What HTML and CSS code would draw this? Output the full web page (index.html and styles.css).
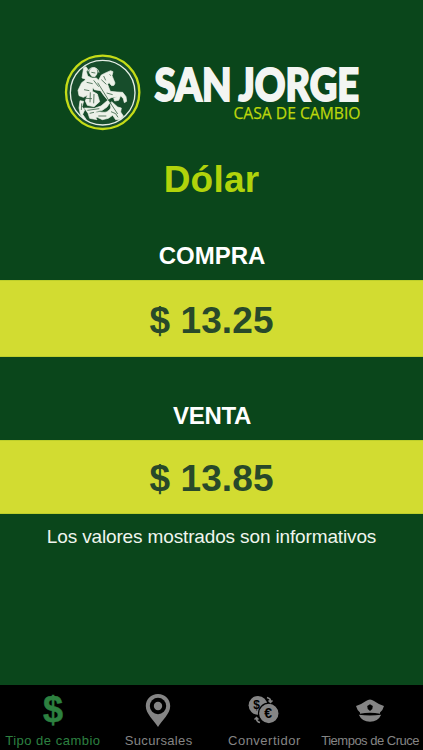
FILE: index.html
```html
<!DOCTYPE html>
<html lang="es">
<head>
<meta charset="utf-8">
<title>San Jorge Casa de Cambio</title>
<link rel="stylesheet" href="styles.css">
</head>
<body>
<main class="screen">
  <header class="brand">
    <svg class="emblem" viewBox="0 0 255 255" aria-hidden="true">
      <circle class="ring" cx="128" cy="127" r="110"/>
      <circle class="inner-ring" cx="128" cy="128" r="97"/>
      <g class="figure">
        <path d="M88 68C88 57 95 52 104 53C112 56 113 66 110 73L105 80L95 79Z"/>
        <path d="M66 84L71 53L78 50L84 59L79 64L83 78L96 84L109 84L118 92L122 122L103 119L91 99L73 86Z"/>
        <path d="M79 88L65 98L54 121L57 137L70 142L82 136L76 153L82 166L102 170L119 155L112 132L97 124L100 105Z"/>
        <path d="M118 108L117 88L124 75L138 68L152 62L159 65L156 77L165 99L162 106L155 107L147 98L143 103L147 114L151 124L171 126L188 127L198 140L200 154L193 158L190 146L182 137L176 151L164 153L161 145L171 140L153 143L143 150L132 137L122 123Z"/>
        <path d="M60 152L71 154L66 170L74 180L68 193L79 209L70 206L61 192L57 174Z"/>
        <path d="M73 174L103 175L123 168L143 151L151 157L141 171L127 181L111 184L102 195L111 209L89 205L84 190Z"/>
        <path d="M93 204C109 176 127 190 139 186C147 181 155 177 151 165L155 155L173 171L184 174L182 186L190 198L181 208L167 209L158 196L145 205L127 209L112 202Z"/>
      </g>
      <path class="halo" d="M84 65A17 17 0 0 1 117 68"/>
      <g class="detail">
        <path d="M94 67L106 69M80 97L98 101M72 119L88 122M91 127L90 157M102 132L101 160M77 145L96 146"/>
        <path d="M101 91L116 110M113 98L150 157L173 192M131 78L137 91M124 89L139 103M149 73L152 77M140 129L158 134M82 181L118 176M89 190L102 187M115 198L139 198M153 185L167 191L174 202M65 160L64 180"/>
      </g>
    </svg>
    <svg class="wordmark" viewBox="0 0 214 75" role="img" aria-label="San Jorge Casa de Cambio">
      <text class="word-main" x="9.5" y="46.2" textLength="77" lengthAdjust="spacingAndGlyphs">SAN</text>
      <text class="word-main" x="93.5" y="46.2" textLength="120.5" lengthAdjust="spacingAndGlyphs">JORGE</text>
      <text class="word-sub" x="88.5" y="63.7" textLength="127" lengthAdjust="spacingAndGlyphs">CASA DE CAMBIO</text>
    </svg>
  </header>
  <h1 class="currency">Dólar</h1>
  <section class="rate buy">
    <h2 class="rate-name">COMPRA</h2>
    <p class="rate-value">$ 13.25</p>
  </section>
  <section class="rate sell">
    <h2 class="rate-name">VENTA</h2>
    <p class="rate-value">$ 13.85</p>
  </section>
  <p class="note">Los valores mostrados son informativos</p>
</main>
<nav class="tabs">
  <a class="tab active">
    <svg class="tab-icon" viewBox="0 0 36 36"><text class="dollar" x="18" y="29" text-anchor="middle">$</text></svg>
    <span class="label l1">Tipo de cambio</span>
  </a>
  <a class="tab">
    <svg class="tab-icon" viewBox="0 0 36 36"><path class="fill" d="M17 1C10 1 4.8 6 4.8 13C4.8 21 13 27 17 34C21 27 29.2 21 29.2 13C29.2 6 24 1 17 1Z"/><circle class="hole" cx="17" cy="13" r="8.2"/><circle class="hole-dot" cx="17" cy="13" r="4.2"/></svg>
    <span class="label l2">Sucursales</span>
  </a>
  <a class="tab">
    <svg class="tab-icon" viewBox="0 0 36 36">
      <circle class="fill" cx="12" cy="12.3" r="9.4"/>
      <text class="coin-sign" x="10.5" y="16.3" text-anchor="middle">$</text>
      <circle class="coin" cx="22.8" cy="20.5" r="10.3"/>
      <text class="coin-sign euro" x="22.2" y="25.3" text-anchor="middle">€</text>
      <path class="arrow" d="M21 4.5Q25 5.5 24.5 8.5M22.5 7.5L24.5 9.5L26.5 7.5M10.5 24.5Q10 28.5 14 29.5M8.5 26.5L10.5 24.5L12.5 26.5"/>
    </svg>
    <span class="label l3">Convertidor</span>
  </a>
  <a class="tab">
    <svg class="tab-icon" viewBox="0 0 36 36"><path class="fill" d="M4 13Q10 11 14 8Q18 5 22 8Q26 11 32 13Q31 17 28 19.5V20.7Q18 18.6 8 20.7V19.5Q5 17 4 13ZM6.8 21.8Q18 23 29.2 21.8Q26 28.8 18 28.8Q10 28.8 6.8 21.8Z"/><path class="hole" d="M18 11.2L20.8 13L20.3 16L18 18L15.7 16L15.2 13Z"/></svg>
    <span class="label l4">Tiempos de Cruce</span>
  </a>
</nav>
</body>
</html>
```
FILE: styles.css
```css
* { box-sizing: border-box; }
body {
  margin: 0;
  height: 750px;
  display: flex;
  flex-direction: column;
  overflow: hidden;
  background: #0a461b;
  font-family: "Liberation Sans", Arial, sans-serif;
}
h1, h2, p { margin: 0; }
.screen { height: 685px; padding-top: 50px; text-align: center; }
.brand { display: flex; height: 85px; padding-left: 60px; }
.emblem { width: 85px; height: 85px; }
.ring { fill: #174d2b; stroke: #c4dc17; stroke-width: 7; }
.inner-ring { fill: none; stroke: #e5eee5; stroke-width: 4; }
.figure { fill: #edf1e9; stroke: #edf1e9; stroke-width: 2; stroke-linejoin: round; }
.halo { fill: none; stroke: #edf1e9; stroke-width: 2.5; }
.detail { fill: none; stroke: #41694d; stroke-width: 2.6; }
.wordmark { width: 214px; height: 75px; margin-top: 5px; overflow: visible; }
.word-main { font: 900 45px Lato, sans-serif; fill: #f3f5f2; stroke: #f3f5f2; stroke-width: 2; }
.word-sub { font: 400 17px "Open Sans", sans-serif; fill: #bdd70c; stroke: #bdd70c; stroke-width: .25; }
.currency {
  height: 90px;
  padding-top: 24px;
  font-size: 37px;
  line-height: 41px;
  letter-spacing: .2px;
  color: #b1d30b;
}
.rate-name { font-size: 24px; line-height: 28px; color: #fff; }
.buy .rate-name { height: 55px; padding: 17px 0 0 1px; letter-spacing: 0; }
.sell .rate-name { height: 83px; padding: 45px 0 0 1px; letter-spacing: -.3px; }
.rate-value {
  font-size: 37px;
  font-weight: 700;
  letter-spacing: .1px;
  color: #28492a;
  background: #d2dc31;
  border: solid #bdcf2b;
  border-width: 1px 0;
}
.buy .rate-value { height: 77px; line-height: 79px; }
.sell .rate-value { height: 74px; line-height: 76px; }
.note { padding-top: 12px; font-size: 19px; line-height: 22px; letter-spacing: -.14px; color: #f0f5ee; }
.tabs { display: grid; grid-template-columns: repeat(4, 1fr); height: 65px; background: #000; }
.tab { display: flex; flex-direction: column; align-items: center; padding-top: 8px; min-width: 0; color: #858585; }
.active { color: #2d8140; }
.tab-icon { width: 36px; height: 36px; fill: currentColor; overflow: visible; }
.fill, .hole-dot { fill: currentColor; }
.hole { fill: #000; }
.dollar { font: 700 36px "Liberation Sans", sans-serif; stroke: currentColor; stroke-width: .5; }
.coin { fill: currentColor; stroke: #000; stroke-width: 1.2; }
.coin-sign { font: 700 12px "Liberation Sans", sans-serif; fill: #000; }
.euro { font-size: 14px; }
.arrow { fill: none; stroke: currentColor; stroke-width: 1.5; }
.label { margin-top: 4px; font-size: 13px; line-height: 16px; white-space: nowrap; }
.l1 { letter-spacing: .5px; }
.l2 { letter-spacing: .35px; }
.l3 { letter-spacing: .5px; }
.l4 { letter-spacing: -.5px; }
```
